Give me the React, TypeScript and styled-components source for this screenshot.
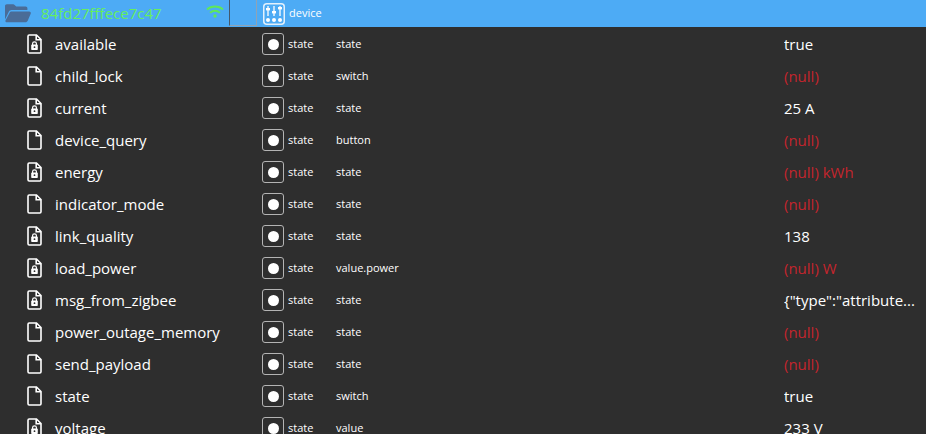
import styled, { createGlobalStyle } from "styled-components";

interface StateRow {
  name: string;
  locked: boolean;
  role: string;
  value: string;
  isNull?: boolean;
}

const rows: StateRow[] = [
  { name: "available", locked: true, role: "state", value: "true" },
  { name: "child_lock", locked: false, role: "switch", value: "(null)", isNull: true },
  { name: "current", locked: true, role: "state", value: "25 A" },
  { name: "device_query", locked: false, role: "button", value: "(null)", isNull: true },
  { name: "energy", locked: true, role: "state", value: "(null) kWh", isNull: true },
  { name: "indicator_mode", locked: false, role: "state", value: "(null)", isNull: true },
  { name: "link_quality", locked: true, role: "state", value: "138" },
  { name: "load_power", locked: true, role: "value.power", value: "(null) W", isNull: true },
  { name: "msg_from_zigbee", locked: true, role: "state", value: '{"type":"attribute...' },
  { name: "power_outage_memory", locked: false, role: "state", value: "(null)", isNull: true },
  { name: "send_payload", locked: false, role: "state", value: "(null)", isNull: true },
  { name: "state", locked: false, role: "switch", value: "true" },
  { name: "voltage", locked: true, role: "value", value: "233 V" },
];

const FolderIcon = () => (
  <svg width="26" height="20" viewBox="0 0 26 20">
    <path
      fill="#4a6c97"
      d="M0 2C0 1 .8.3 1.8.3h6.4c.6 0 1 .2 1.4.6l1.6 1.6h9.4c1 0 1.8.8 1.8 1.8V6H6.600c-1.300 0-2.300.7-2.800 1.800L0 15.500z"
    />
    <path
      fill="#4a6c97"
      d="M6.800 7.500h17.400c1.200 0 2 1.200 1.500 2.300l-3 7c-.4.900-1.300 1.500-2.300 1.500H1.600c-1 0-1.600-1-1.100-1.900l4-7.500c.5-.9 1.300-1.400 2.300-1.400z"
    />
  </svg>
);

const WifiIcon = () => (
  <svg width="18" height="13" viewBox="0 0 18 13" fill="none" stroke="#5fe85a" strokeWidth="2">
    <path d="M1 4.400C5.400.6 12.600.6 17 4.400" />
    <path d="M4 7.700C7 5.300 11 5.300 14 7.700" />
    <circle cx="9" cy="11" r="1.700" fill="#5fe85a" stroke="none" />
  </svg>
);

const DeviceIcon = () => (
  <svg width="22" height="22" viewBox="0 0 22 22" fill="none">
    <rect x="0.75" y="0.75" width="20.500" height="20.500" rx="3" stroke="#e4f1fc" strokeWidth="1.500" />
    <g stroke="#fff" strokeWidth="1.300">
      <path d="M5 3v10M11 3v10M17 3v10" />
    </g>
    <g fill="#fff">
      <rect x="3" y="5" width="4" height="2.400" />
      <rect x="9" y="8" width="4" height="2.400" />
      <rect x="15" y="4" width="4" height="2.400" />
      <circle cx="5" cy="17" r="2" />
      <circle cx="11" cy="17" r="2" />
      <circle cx="17" cy="17" r="2" />
    </g>
  </svg>
);

const FileIcon = ({ locked }: { locked: boolean }) => (
  <svg width="15" height="20" viewBox="0 0 15 20" fill="none">
    <path
      d="M2.200 1H9.500L14 5.500V17.800C14 18.500 13.500 19 12.800 19H2.200C1.500 19 1 18.500 1 17.800V2.200C1 1.500 1.500 1 2.200 1Z"
      stroke="#fff"
      strokeWidth="1.600"
    />
    <path d="M9.200 1V5.800H14" stroke="#fff" strokeWidth="1.600" />
    {locked && (
      <g>
        <path d="M5.600 11V9.600C5.600 8.500 6.400 7.800 7.500 7.800S9.400 8.500 9.400 9.600V11" stroke="#fff" strokeWidth="1.200" />
        <rect x="4.200" y="10.600" width="6.600" height="5.400" rx="0.800" fill="#fff" />
        <circle cx="7.500" cy="13.200" r="0.900" fill="#2e2e2e" />
      </g>
    )}
  </svg>
);

export default function App() {
  return (
    <>
      <GlobalStyle />
      <Page>
        <HeaderRow>
          <FolderSlot>
            <FolderIcon />
          </FolderSlot>
          <DeviceName>84fd27fffece7c47</DeviceName>
          <WifiSlot>
            <WifiIcon />
          </WifiSlot>
          <HeaderTab />
          <DeviceSlot>
            <DeviceIcon />
          </DeviceSlot>
          <DeviceLabel>device</DeviceLabel>
        </HeaderRow>
        <List>
          {rows.map((row) => (
            <Row key={row.name}>
              <NameCell>
                <FileIcon locked={row.locked} />
                <Name>{row.name}</Name>
              </NameCell>
              <TypeButton>
                <Dot />
              </TypeButton>
              <TypeLabel>state</TypeLabel>
              <Role>{row.role}</Role>
              <Value $isNull={row.isNull}>{row.value}</Value>
            </Row>
          ))}
        </List>
      </Page>
    </>
  );
}

const GlobalStyle = createGlobalStyle`
  html, body {
    margin: 0;
    padding: 0;
    height: 100%;
    overflow: hidden;
    background: #2e2e2e;
  }
`;

const Page = styled.div`
  width: 926px;
  height: 434px;
  overflow: hidden;
  background: #2e2e2e;
  font-family: "Open Sans", "Noto Sans", sans-serif;
`;

const HeaderRow = styled.div`
  height: 27px;
  display: flex;
  align-items: center;
  background: #4dabf5;
  margin-bottom: 1px;
`;

const FolderSlot = styled.div`
  width: 41px;
  padding-left: 5px;
  box-sizing: border-box;
  display: flex;
`;

const DeviceName = styled.div`
  width: 165px;
  font-size: 15px;
  line-height: 24px;
  margin-bottom: 2px;
  color: #66ee5f;
`;

const WifiSlot = styled.div`
  width: 23px;
  margin-bottom: 5px;
  display: flex;
`;

const HeaderTab = styled.div`
  width: 28px;
  height: 26px;
  margin-bottom: 1px;
  box-sizing: border-box;
  border-left: 1px solid #44586b;
  border-right: 1px solid #8fa3b5;
  border-bottom: 1px solid #8fa3b5;
`;

const DeviceSlot = styled.div`
  width: 26px;
  margin-left: 6px;
  display: flex;
`;

const DeviceLabel = styled.div`
  font-size: 11px;
  line-height: 16px;
  margin-bottom: 2px;
  color: #fff;
`;

const List = styled.div`
  display: flex;
  flex-direction: column;
`;

const Row = styled.div`
  height: 32px;
  flex: none;
  display: flex;
  align-items: center;
  color: #fff;
`;

const NameCell = styled.div`
  width: 262px;
  padding-left: 27px;
  box-sizing: border-box;
  display: flex;
  align-items: center;
  gap: 13px;
`;

const Name = styled.span`
  font-size: 15px;
  line-height: 20px;
  margin-bottom: 1px;
`;

const TypeButton = styled.div`
  width: 22px;
  height: 22px;
  box-sizing: border-box;
  border: 1px solid #b4b4b4;
  border-radius: 3px;
  display: flex;
  align-items: center;
  justify-content: center;
  margin-right: 4px;
`;

const Dot = styled.div`
  width: 11px;
  height: 11px;
  border-radius: 50%;
  background: #fff;
`;

const TypeLabel = styled.span`
  width: 48px;
  font-size: 11px;
  line-height: 16px;
  margin-bottom: 1px;
`;

const Role = styled.span`
  width: 448px;
  font-size: 11px;
  line-height: 16px;
  margin-bottom: 1px;
`;

const Value = styled.span<{ $isNull?: boolean }>`
  width: 132px;
  font-size: 15px;
  line-height: 20px;
  margin-bottom: 1px;
  white-space: nowrap;
  overflow: hidden;
  color: ${({ $isNull }) => ($isNull ? "#c4252d" : "#fff")};
`;
